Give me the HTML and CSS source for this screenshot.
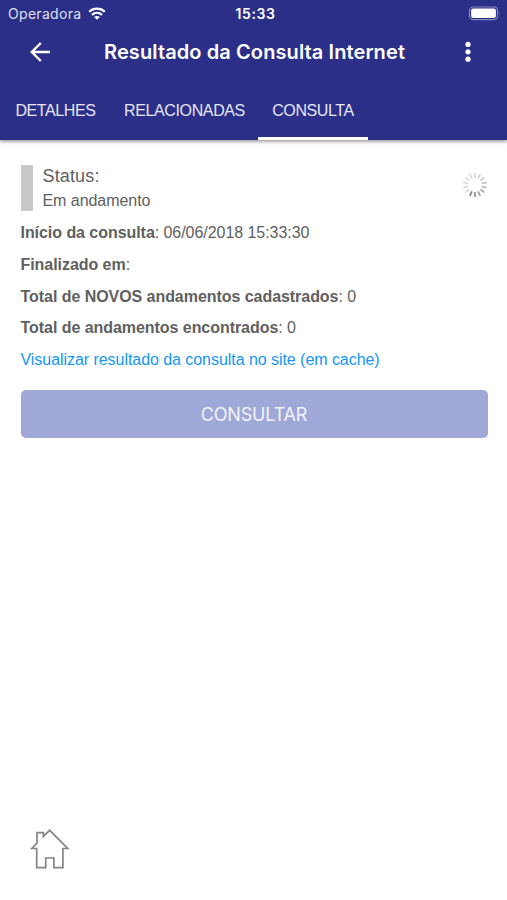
FILE: index.html
```
<!DOCTYPE html>
<html lang="pt-BR">
<head>
    <meta charset="utf-8">
    <title>Resultado da Consulta Internet</title>
    <link rel="stylesheet" href="styles.css">
</head>
<body>
    <header class="header">
        <div class="status-bar">
            <div class="carrier">
                <span>Operadora</span>
                <svg class="wifi" width="18" height="14" viewBox="0 0 18 14">
                    <path d="M1.2 4.8C5.5 .6 12.5 .6 16.8 4.8M4 7.9C7 5.2 11 5.2 14 7.9" fill="none" stroke="#fff" stroke-width="2.3"/>
                    <path d="M6.2 10C7.8 8.7 10.2 8.7 11.8 10L9 12.8Z" fill="#fff"/>
                </svg>
            </div>
            <span class="clock">15:33</span>
            <svg class="battery" width="33" height="15" viewBox="0 0 33 15">
                <rect x="1.5" y="1" width="28" height="12.6" rx="3.5" fill="none" stroke="#8688bd" stroke-width="1.1"/>
                <rect x="3.1" y="2.6" width="24.8" height="9.4" rx="2" fill="#fff"/>
                <path d="M30.9 5.2Q32.5 7.2 30.9 9.2Z" fill="#8688bd"/>
            </svg>
        </div>
        <div class="toolbar">
            <svg class="back" width="22" height="22" viewBox="0 0 22 22">
                <path d="M20.8 11H3M11.8 2L2.8 11L11.8 20" fill="none" stroke="#fff" stroke-width="2.4"/>
            </svg>
            <h1 class="title">Resultado da Consulta Internet</h1>
            <svg class="more" width="6" height="22" viewBox="0 0 6 22">
                <circle cx="3" cy="3.4" r="2.6" fill="#fff"/>
                <circle cx="3" cy="10.8" r="2.6" fill="#fff"/>
                <circle cx="3" cy="18.2" r="2.6" fill="#fff"/>
            </svg>
        </div>
        <nav class="tabs">
            <a class="tab tab-detalhes">DETALHES</a>
            <a class="tab tab-relacionadas">RELACIONADAS</a>
            <a class="tab tab-consulta active">CONSULTA</a>
        </nav>
    </header>

    <main class="content">
        <div class="status">
            <div class="status-text">
                <p class="status-label">Status:</p>
                <p class="status-value">Em andamento</p>
            </div>
            <svg class="spinner" width="26" height="26" viewBox="-13 -13 26 26" stroke-width="1.9">
                <path d="M0-7V-12" stroke="#ddd"/>
                <path d="M0-7V-12" stroke="#d6d6d6" transform="rotate(25.7)"/>
                <path d="M0-7V-12" stroke="#ccc" transform="rotate(51.4)"/>
                <path d="M0-7V-12" stroke="#c4c4c4" transform="rotate(77.1)"/>
                <path d="M0-7V-12" stroke="#bbb" transform="rotate(102.9)"/>
                <path d="M0-7V-12" stroke="#b2b2b2" transform="rotate(128.6)"/>
                <path d="M0-7V-12" stroke="#a6a6a6" transform="rotate(154.3)"/>
                <path d="M0-7V-12" stroke="#999" transform="rotate(180)"/>
                <path d="M0-7V-12" stroke="#888" transform="rotate(205.7)"/>
                <path d="M0-7V-12" stroke="#ddd" transform="rotate(231.4)"/>
                <path d="M0-7V-12" stroke="#ddd" transform="rotate(257.1)"/>
                <path d="M0-7V-12" stroke="#ddd" transform="rotate(282.9)"/>
                <path d="M0-7V-12" stroke="#ddd" transform="rotate(308.6)"/>
                <path d="M0-7V-12" stroke="#ddd" transform="rotate(334.3)"/>
            </svg>
        </div>
        <p class="info"><b>Início da consulta</b>: 06/06/2018 15:33:30</p>
        <p class="info"><b>Finalizado em</b>:</p>
        <p class="info"><b>Total de NOVOS andamentos cadastrados</b>: 0</p>
        <p class="info"><b>Total de andamentos encontrados</b>: 0</p>
        <p class="info"><a class="link">Visualizar resultado da consulta no site (em cache)</a></p>
        <button class="consultar">CONSULTAR</button>
    </main>

    <footer class="footer">
        <svg class="home" width="40" height="42" viewBox="0 0 40 42">
            <path d="M1.7 20.5L7 15.2V4.7H13.4V8.4L19.7 2.3L37.7 20.5H32.9V39.6H23.9V30H15.7V39.6H6.7V20.5Z" fill="none" stroke="#858585" stroke-width="1.7"/>
        </svg>
    </footer>
</body>
</html>
```
FILE: styles.css
```
* { box-sizing: border-box; }
body { margin: 0; height: 900px; display: flex; flex-direction: column; background: #fff; color: #606060; font-family: "Liberation Sans", Arial, sans-serif; font-size: 16px; }
p, h1 { margin: 0; }
svg { display: block; }

.header { height: 140px; background: #2b2f88; color: #fff; box-shadow: 0 2px 3px rgba(0, 0, 0, 0.35); }
.status-bar { height: 27px; padding: 0 6px 0 8px; display: grid; grid-template-columns: 1fr auto 1fr; align-items: center; font-family: Inter, sans-serif; font-size: 14px; }
.carrier { display: flex; align-items: center; gap: 7px; color: #dfe0f2; letter-spacing: 0.3px; }
.clock { padding-left: 2px; font-weight: 600; letter-spacing: 0.6px; }
.battery { justify-self: end; }
.toolbar { height: 50px; padding: 0 36px 0 29px; display: flex; align-items: center; }
.title { margin: 0 auto 0 53px; font-family: Inter, sans-serif; font-size: 20px; font-weight: 600; letter-spacing: 0.1px; white-space: nowrap; }

.tabs { height: 63px; display: flex; }
.tab { display: flex; align-items: center; justify-content: center; padding-top: 7px; border-bottom: 3px solid transparent; letter-spacing: -0.38px; white-space: nowrap; color: #e6e7f8; }
.tab-detalhes { width: 111px; }
.tab-relacionadas { width: 147px; }
.tab-consulta { width: 110px; }
.active { border-bottom-color: #fff; }

.content { flex: 1; padding: 25px 19.5px 0 20.5px; }
.status { display: flex; justify-content: space-between; height: 46px; margin-bottom: 6px; }
.status-text { padding-left: 10px; border-left: 12px solid #c8c8c8; }
.status-label { font-size: 18px; line-height: 22px; letter-spacing: 0.15px; }
.status-value { line-height: 28px; letter-spacing: -0.05px; }
.spinner { margin-top: 7px; }
.info { height: 31.75px; line-height: 31.75px; letter-spacing: -0.05px; white-space: nowrap; }
.link { color: #1497f5; }
.consultar { display: block; width: 100%; height: 48.5px; margin-top: 14px; padding: 0; border: none; border-radius: 5px; background: #9fa8d7; color: #f2f4ff; font-family: Inter, sans-serif; font-size: 18px; letter-spacing: -0.15px; }

.footer { padding: 0 30px 30px; }
```
